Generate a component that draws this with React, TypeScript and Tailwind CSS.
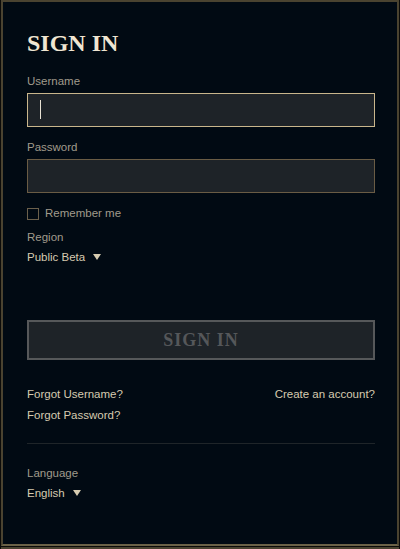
import { useState } from "react";

const body = { fontFamily: '"Liberation Sans", Arial, sans-serif' };
const serif = { fontFamily: '"Liberation Serif", "Times New Roman", serif' };

function Caret() {
  return (
    <svg width="8" height="6" viewBox="0 0 8 6" className="ml-2 shrink-0">
      <polygon points="0,0 8,0 4,6" fill="#d6cbb0" />
    </svg>
  );
}

function Field({
  label,
  type,
  focused,
}: {
  label: string;
  type: string;
  focused?: boolean;
}) {
  return (
    <div className="flex flex-col">
      <label className="text-[11.5px] leading-4 text-[#a09b8c]">{label}</label>
      <div
        className={
          focused
            ? "relative mt-1 h-[34px] border border-[#c9b68c] bg-[#1e2328]"
            : "relative mt-1 h-[34px] border border-[#6a5c45] bg-[#1e2328]"
        }
      >
        <input
          type={type}
          className="h-full w-full bg-transparent px-3 text-[13px] text-[#f0e6d2] caret-transparent outline-none"
        />
        {focused && (
          <span className="absolute left-[12px] top-[6px] h-[19px] w-px bg-[#e8e2d4]" />
        )}
      </div>
    </div>
  );
}

export default function App() {
  const [remember, setRemember] = useState(false);

  return (
    <div className="flex h-[549px] w-[400px] flex-col bg-[#0b0b09] px-px" style={body}>
      <div className="flex flex-1 flex-col border-2 border-[#4a4330] border-b-[#6b6247] bg-[#010a13] pl-6 pr-[22px] pt-[27px]">
        <h1
          className="text-[24px] font-bold leading-[28px] text-[#f0e6d2]"
          style={serif}
        >
          SIGN IN
        </h1>

        <div className="mt-4">
          <Field label="Username" type="text" focused />
        </div>
        <div className="mt-3">
          <Field label="Password" type="password" />
        </div>

        <label className="mt-[13px] flex h-4 cursor-pointer items-center">
          <span
            onClick={() => setRemember(!remember)}
            className="h-3 w-3 border border-[#6b604c] bg-[#010a13]"
          />
          <span className="ml-[6px] pb-[2px] text-[11.5px] leading-[14px] text-[#a09b8c]">
            Remember me
          </span>
        </label>

        <div className="mt-[8px] pb-[2px] text-[11.5px] leading-[14px] text-[#a09b8c]">Region</div>
        <div className="mt-1 flex items-center pb-[2px] text-[11.5px] leading-[14px] text-[#d6cbb0]">
          Public Beta
          <Caret />
        </div>

        <button
          className="mt-[54px] h-10 w-full border-2 border-[#56585a] bg-[#1e2328] text-[18px] font-bold tracking-[1px] text-[#55575a]"
          style={serif}
        >
          SIGN IN
        </button>

        <div className="mt-[27px] flex justify-between pb-[2px] text-[11.5px] leading-[14px] text-[#d6cbb0]">
          <span>Forgot Username?</span>
          <span>Create an account?</span>
        </div>
        <div className="mt-[5px] pb-[2px] text-[11.5px] leading-[14px] text-[#d6cbb0]">
          Forgot Password?
        </div>

        <div className="mt-[19px] h-px bg-[#1f2529]" />

        <div className="mt-[22px] pb-[2px] text-[11.5px] leading-[14px] text-[#a09b8c]">Language</div>
        <div className="mt-1 flex items-center pb-[2px] text-[11.5px] leading-[14px] text-[#d6cbb0]">
          English
          <Caret />
        </div>
      </div>
      <div className="mt-px h-[2px] bg-[#4a4330]" />
    </div>
  );
}
